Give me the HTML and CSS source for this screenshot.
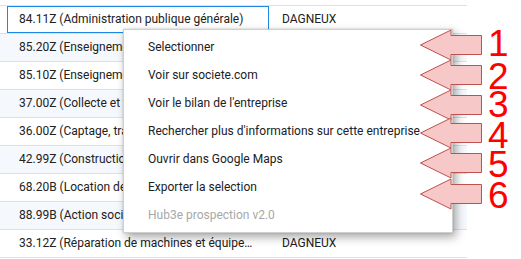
FILE: index.html
```html
<!DOCTYPE html>
<html lang="fr">
<head>
    <meta charset="UTF-8">
    <meta name="viewport" content="width=device-width, initial-scale=1.0">
    <title>Hub3e prospection</title>
    <link rel="stylesheet" href="styles.css">
</head>
<body>
    <div class="grid">
        <div class="row">
            <div class="cell naf selected">84.11Z (Administration publique générale)</div>
            <div class="cell city">DAGNEUX</div>
        </div>
        <div class="row odd">
            <div class="cell naf">85.20Z (Enseignement secondaire)</div>
            <div class="cell city">DAGNEUX</div>
        </div>
        <div class="row">
            <div class="cell naf">85.10Z (Enseignement pré-primaire)</div>
            <div class="cell city">DAGNEUX</div>
        </div>
        <div class="row odd">
            <div class="cell naf">37.00Z (Collecte et traitement des eaux usées)</div>
            <div class="cell city">DAGNEUX</div>
        </div>
        <div class="row">
            <div class="cell naf">36.00Z (Captage, traitement et distribution d'eau)</div>
            <div class="cell city">DAGNEUX</div>
        </div>
        <div class="row odd">
            <div class="cell naf">42.99Z (Construction d'autres ouvrages de génie civil)</div>
            <div class="cell city">DAGNEUX</div>
        </div>
        <div class="row">
            <div class="cell naf">68.20B (Location de terrains et d'autres biens immobiliers)</div>
            <div class="cell city">DAGNEUX</div>
        </div>
        <div class="row odd">
            <div class="cell naf">88.99B (Action sociale sans hébergement n.c.a.)</div>
            <div class="cell city">DAGNEUX</div>
        </div>
        <div class="row">
            <div class="cell naf">33.12Z (Réparation de machines et équipements mécaniques)</div>
            <div class="cell city">DAGNEUX</div>
        </div>
    </div>

    <ul class="menu">
        <li>Selectionner</li>
        <li>Voir sur societe.com</li>
        <li>Voir le bilan de l'entreprise</li>
        <li>Rechercher plus d'informations sur cette entreprise</li>
        <li>Ouvrir dans Google Maps</li>
        <li>Exporter la selection</li>
        <li class="disabled">Hub3e prospection v2.0</li>
    </ul>

    <svg class="callouts" width="521" height="259" viewBox="0 0 521 259">
        <g class="arrow">
            <polygon points="420.5,45 451,30 451,35.5 481.5,35.5 481.5,54.5 451,54.5 451,60"/>
            <polygon points="420.5,75 451,60 451,65.5 481.5,65.5 481.5,84.5 451,84.5 451,90"/>
            <polygon points="420.5,105 451,90 451,95.5 481.5,95.5 481.5,114.5 451,114.5 451,120"/>
            <polygon points="420.5,133 451,118 451,123.5 481.5,123.5 481.5,142.5 451,142.5 451,148"/>
            <polygon points="420.5,163 451,148 451,153.5 481.5,153.5 481.5,172.5 451,172.5 451,178"/>
            <polygon points="420.5,194 451,179 451,184.5 481.5,184.5 481.5,203.5 451,203.5 451,209"/>
        </g>
        <g class="num">
            <text x="488" y="56">1</text>
            <text x="488" y="89">2</text>
            <text x="488" y="117">3</text>
            <text x="488" y="148">4</text>
            <text x="488" y="177">5</text>
            <text x="488" y="208">6</text>
        </g>
    </svg>
</body>
</html>
```

FILE: styles.css
```css
body, html {
    margin: 0;
    padding: 0;
    font-family: Roboto, Arial, sans-serif;
    font-size: 12px;
    color: #212121;
    background-color: white;
}

.grid {
    width: 467px;
    margin-top: 5px;
    border-top: 1px solid #e0e0e0;
}

.row {
    display: flex;
    height: 27px;
    padding-left: 7px;
    border-bottom: 1px solid #e0e0e0;
}

.row.odd {
    background-color: #f5f8fc;
}

.cell {
    box-sizing: border-box;
    height: 27px;
    line-height: 25px;
    border: 1px solid transparent;
    white-space: nowrap;
    overflow: hidden;
    text-overflow: ellipsis;
}

.cell.naf {
    width: 262px;
    padding: 0 11px;
}

.cell.city {
    padding-left: 12px;
}

.cell.selected {
    border-color: #1e88e5;
}

.menu {
    position: absolute;
    left: 123px;
    top: 29px;
    width: 330px;
    box-sizing: border-box;
    margin: 0;
    padding: 3px 0;
    list-style: none;
    background-color: white;
    border: 1px solid #cfcfcf;
    box-shadow: 3px 4px 9px rgba(0, 0, 0, 0.35), 0 0 2px rgba(0, 0, 0, 0.15);
}

.menu li {
    height: 28px;
    line-height: 28px;
    padding-left: 24px;
    color: #202124;
    white-space: nowrap;
}

.menu li.disabled {
    color: #a8a8a8;
}

.callouts {
    position: absolute;
    left: 0;
    top: 0;
    pointer-events: none;
}

.arrow polygon {
    fill: #f6c8c8;
    stroke: #c0504d;
    stroke-width: 1;
}

.num text {
    fill: #ff0000;
    font-family: "Liberation Sans", Arial, sans-serif;
    font-size: 37px;
}
```
